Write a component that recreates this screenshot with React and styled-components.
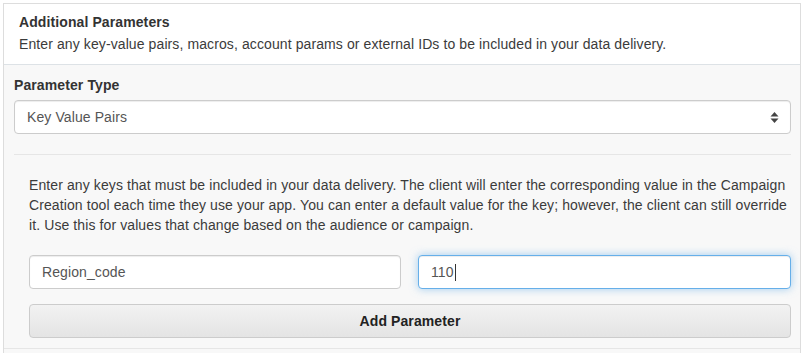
import React from 'react';
import styled, { createGlobalStyle } from 'styled-components';

const GlobalStyle = createGlobalStyle`
  body {
    margin: 0;
    background: #ffffff;
    font-family: 'Liberation Sans', Arial, sans-serif;
    font-size: 14px;
    letter-spacing: 0.1px;
    color: #333333;
  }
`;

const Page = styled.div`
  padding: 3px 4px 0 3px;
`;

const Panel = styled.section`
  border: 1px solid #dddddd;
  border-bottom: none;
  background: #f8f8f8;
`;

const Header = styled.header`
  background: #ffffff;
  border-bottom: 1px solid #dde2e6;
  padding: 8px 15px 10px;
  line-height: 20px;
`;

const Title = styled.h3`
  margin: 0 0 2px;
  font-size: 14px;
  font-weight: 700;
  color: #333333;
`;

const Subtitle = styled.p`
  margin: 0;
  color: #3b3b3b;
`;

const Body = styled.div`
  padding: 10px 9px 0 10px;
`;

const Label = styled.label`
  display: block;
  font-weight: 700;
  line-height: 20px;
  margin-bottom: 5px;
`;

const SelectBox = styled.div`
  position: relative;
  height: 34px;
  box-sizing: border-box;
  border: 1px solid #cccccc;
  border-radius: 4px;
  background: #ffffff;
  padding: 0 12px;
  display: flex;
  align-items: center;
  color: #555555;
  box-shadow: inset 0 1px 1px rgba(0, 0, 0, 0.075);
`;

const Arrows = styled.svg`
  position: absolute;
  right: 11px;
  top: 11px;
`;

const Rule = styled.hr`
  border: none;
  border-top: 1px solid #e6e6e6;
  margin: 20px 0 20px;
`;

const Section = styled.div`
  padding-left: 15px;
`;

const Help = styled.p`
  margin: 0 0 20px;
  line-height: 20px;
  color: #3b3b3b;
`;

const Row = styled.div`
  display: grid;
  grid-template-columns: 372px 1fr;
  gap: 17px;
  margin-bottom: 15px;
`;

const Field = styled.div`
  height: 34px;
  box-sizing: border-box;
  border: 1px solid ${(p) => (p.$focused ? '#66afe9' : '#cccccc')};
  border-radius: 4px;
  background: #ffffff;
  padding: 0 12px;
  display: flex;
  align-items: center;
  color: #555555;
  box-shadow: ${(p) =>
    p.$focused
      ? 'inset 0 1px 1px rgba(0,0,0,.075), 0 0 8px rgba(102,175,233,.6)'
      : 'inset 0 1px 1px rgba(0,0,0,.075)'};
`;

const Caret = styled.span`
  display: inline-block;
  width: 1px;
  height: 17px;
  background: #333333;
  margin-left: 1px;
`;

const Button = styled.button`
  display: block;
  width: 100%;
  height: 34px;
  border: 1px solid #cccccc;
  border-radius: 4px;
  background: linear-gradient(to bottom, #f2f2f2 0%, #e4e4e4 100%);
  font-family: 'Liberation Sans', Arial, sans-serif;
  font-size: 14px;
  letter-spacing: 0.1px;
  font-weight: 700;
  color: #222222;
  cursor: pointer;
`;

const Footer = styled.div`
  margin-top: 10px;
  margin-left: -10px;
  margin-right: -9px;
  border-top: 1px solid #e6e6e6;
  height: 5px;
`;

export default function App() {
  return (
    <>
      <GlobalStyle />
      <Page>
        <Panel>
          <Header>
            <Title>Additional Parameters</Title>
            <Subtitle>
              Enter any key-value pairs, macros, account params or external IDs to be included in your data delivery.
            </Subtitle>
          </Header>
          <Body>
            <Label>Parameter Type</Label>
            <SelectBox>
              Key Value Pairs
              <Arrows width="9" height="12" viewBox="0 0 9 12">
                <path d="M4.5 0 L8.5 4.5 L0.5 4.5 Z" fill="#444" />
                <path d="M0.5 6.5 L8.5 6.5 L4.5 11 Z" fill="#444" />
              </Arrows>
            </SelectBox>
            <Rule />
            <Section>
              <Help>
                Enter any keys that must be included in your data delivery. The client will enter the corresponding value in the Campaign Creation tool each time they use your app. You can enter a default value for the key; however, the client can still override it. Use this for values that change based on the audience or campaign.
              </Help>
              <Row>
                <Field>Region_code</Field>
                <Field $focused>
                  110<Caret />
                </Field>
              </Row>
              <Button>Add Parameter</Button>
            </Section>
            <Footer />
          </Body>
        </Panel>
      </Page>
    </>
  );
}
